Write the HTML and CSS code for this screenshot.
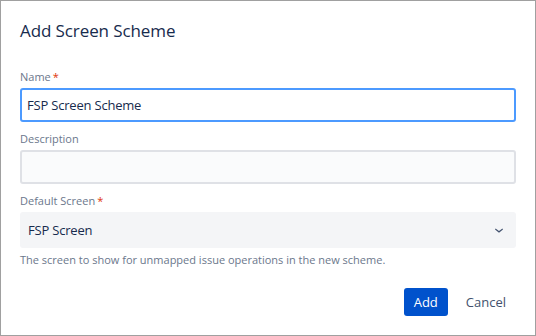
FILE: index.html
```html
<!DOCTYPE html>
<html lang="en">
  <head>
    <meta charset="utf-8">
    <title>Add Screen Scheme</title>
    <link rel="stylesheet" href="styles.css">
  </head>
  <body>
    <div class="dialog">
      <h2 class="dialog-title">Add Screen Scheme</h2>

      <form class="dialog-form">
        <div class="field field-first">
          <label class="field-label">Name<span class="required">*</span></label>
          <div class="text-input focused">FSP Screen Scheme</div>
        </div>

        <div class="field">
          <label class="field-label">Description</label>
          <div class="text-input empty"></div>
        </div>

        <div class="field">
          <label class="field-label">Default Screen<span class="required">*</span></label>
          <div class="select-input">
            <span>FSP Screen</span>
            <svg class="chevron" width="8" height="5" viewBox="0 0 8 5">
              <path d="M0.6 0.4 L4 3 L7.4 0.4 L8 1.4 L4 4.8 L0 1.4 Z" fill="#42526e"/>
            </svg>
          </div>
          <div class="helper">The screen to show for unmapped issue operations in the new scheme.</div>
        </div>

        <div class="dialog-footer">
          <button class="btn btn-primary" type="button">Add</button>
          <button class="btn btn-link" type="button">Cancel</button>
        </div>
      </form>
    </div>
  </body>
</html>
```

FILE: styles.css
```css
/* Dialog */
body {
    margin: 0;
    font-family: "Segoe UI", "Open Sans", "Noto Sans", sans-serif;
    color: #172b4d;
    background: #ffffff;
}

.dialog {
    box-sizing: border-box;
    width: 536px;
    height: 336px;
    border: 1px solid #a0a0a0;
    padding: 18px 19px 0 19px;
}

.dialog-title {
    margin: 0;
    font-size: 17px;
    font-weight: normal;
    line-height: 24px;
    letter-spacing: -0.1px;
    color: #172b4d;
}

.field {
    margin-top: 9px;
}

.field-first {
    margin-top: 26px;
}

.field-label {
    display: block;
    font-size: 11px;
    line-height: 16px;
    color: #6b778c;
    margin-bottom: 3px;
}

.required {
    color: #de350b;
    margin-left: 2px;
}

.text-input {
    box-sizing: border-box;
    height: 34px;
    border: 2px solid #dfe1e6;
    border-radius: 3px;
    background: #fafbfc;
    padding: 0 5px;
    font-size: 13px;
    letter-spacing: -0.2px;
    line-height: 30px;
}

.text-input.focused {
    border-color: #4c9aff;
    background: #ffffff;
}

.select-input {
    box-sizing: border-box;
    height: 36px;
    border-radius: 3px;
    background: #f4f5f7;
    padding: 0 13px 0 8px;
    display: flex;
    align-items: center;
    justify-content: space-between;
    font-size: 13px;
    letter-spacing: -0.2px;
}

.chevron {
    display: block;
}

.helper {
    margin-top: 4px;
    font-size: 11px;
    line-height: 16px;
    color: #6b778c;
}

.dialog-footer {
    display: flex;
    justify-content: flex-end;
    gap: 8px;
    margin-top: 20px;
}

.btn {
    height: 28px;
    border: none;
    border-radius: 3px;
    font-family: inherit;
    font-size: 13px;
    padding: 0 10px;
    cursor: pointer;
}

.btn-primary {
    background: #0052cc;
    color: #ffffff;
}

.btn-link {
    background: transparent;
    color: #42526e;
}
```
